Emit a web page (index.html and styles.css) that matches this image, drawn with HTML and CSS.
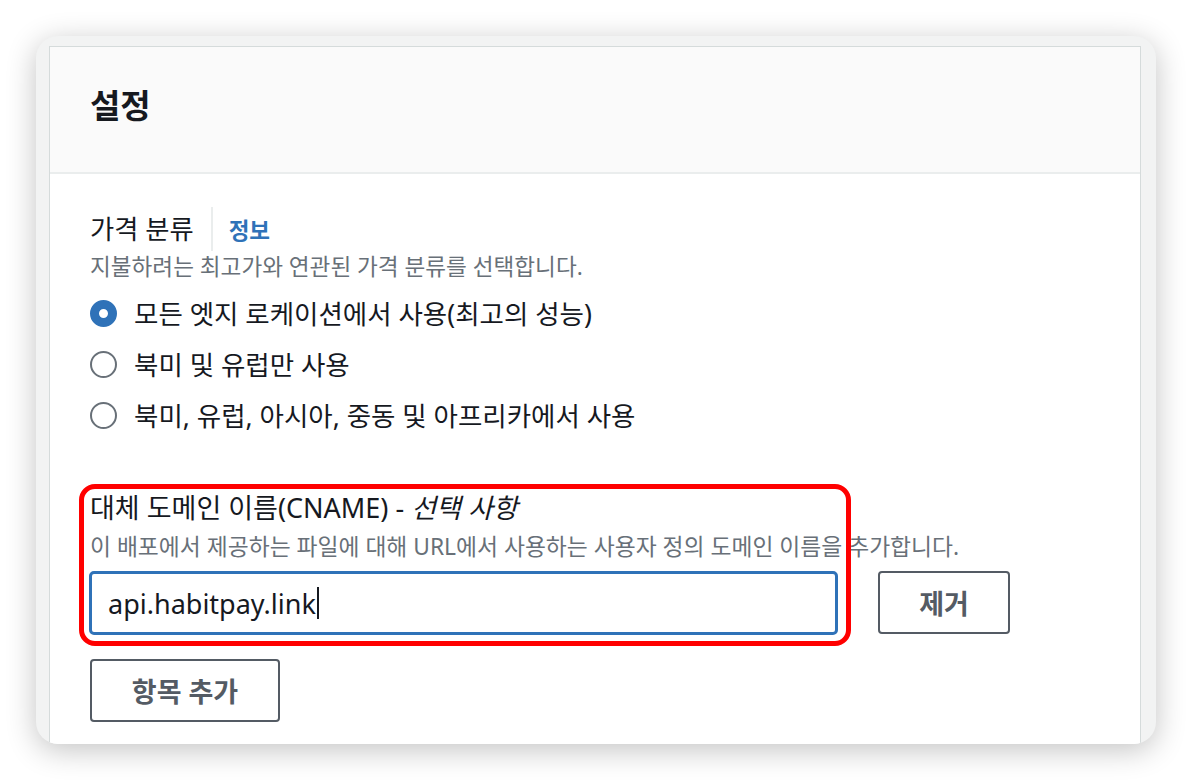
FILE: index.html
```html
<!DOCTYPE html>
<html lang="ko">
<head>
<meta charset="utf-8">
<title>설정</title>
<link rel="stylesheet" href="styles.css">
</head>
<body>
<div class="stage">
  <div class="frame">
    <section class="panel">
      <header class="panel-head">
        <h2 class="title">설정</h2>
      </header>
      <div class="panel-body">
        <div class="field">
          <div class="label-row">
            <span class="label">가격 분류</span>
            <span class="sep"></span>
            <a class="info">정보</a>
          </div>
          <div class="desc">지불하려는 최고가와 연관된 가격 분류를 선택합니다.</div>
          <div class="radios">
            <div class="radio-row"><span class="radio checked"></span><span class="radio-text">모든 엣지 로케이션에서 사용(최고의 성능)</span></div>
            <div class="radio-row"><span class="radio"></span><span class="radio-text">북미 및 유럽만 사용</span></div>
            <div class="radio-row"><span class="radio"></span><span class="radio-text">북미, 유럽, 아시아, 중동 및 아프리카에서 사용</span></div>
          </div>
        </div>
        <div class="field cname">
          <div class="cname-label">대체 도메인 이름(CNAME) - <i>선택 사항</i></div>
          <div class="desc cname-desc">이 배포에서 제공하는 파일에 대해 URL에서 사용하는 사용자 정의 도메인 이름을 추가합니다.</div>
          <div class="input-row">
            <div class="input"><span class="value">api.habitpay.link</span><span class="caret"></span></div>
            <button class="btn remove">제거</button>
          </div>
          <div class="highlight"></div>
        </div>
        <button class="btn add">항목 추가</button>
      </div>
    </section>
  </div>
</div>
</body>
</html>
```
FILE: styles.css
```css
html, body {
  margin: 0;
  padding: 0;
  background: #ffffff;
}
body {
  font-family: "Noto Sans", "Noto Sans CJK KR", sans-serif;
  color: #16191f;
}
.stage {
  padding: 36px;
}
.frame {
  box-sizing: border-box;
  width: 1120px;
  height: 708px;
  border-radius: 22px;
  overflow: hidden;
  background: #f2f3f3;
  box-shadow: 0 6px 30px rgba(0, 0, 0, 0.24);
  padding: 10px 15px 0 13px;
}
.panel {
  background: #ffffff;
  border: 1px solid #d5dbdb;
  height: 800px;
}
.panel-head {
  background: #fafafa;
  border-bottom: 2px solid #eaeded;
  padding: 38px 40px 45px;
}
.title {
  margin: 0;
  font-size: 33px;
  line-height: 42px;
  font-weight: 700;
  color: #16191f;
}
.panel-body {
  padding: 33px 40px 0;
}
.label-row {
  display: flex;
  align-items: center;
  height: 44px;
}
.label {
  font-size: 26.3px;
  line-height: 34px;
}
.sep {
  width: 2px;
  height: 44px;
  background: #eaeded;
  margin: 0 16px 0 17px;
}
.info {
  font-size: 22.5px;
  font-weight: 700;
  color: #2f72b8;
}
.desc {
  font-size: 22.6px;
  line-height: 30px;
  color: #687078;
  margin-top: 1px;
}
.radios {
  margin-top: 6px;
}
.radio-row {
  display: flex;
  align-items: center;
  height: 51px;
}
.radio {
  box-sizing: border-box;
  width: 27px;
  height: 27px;
  border-radius: 50%;
  border: 2px solid #687078;
  background: #ffffff;
  margin-right: 17px;
}
.radio.checked {
  border: 9px solid #2f72b8;
}
.radio-text {
  font-size: 26.5px;
  line-height: 34px;
}
.cname {
  position: relative;
  margin-top: 50px;
}
.cname-label {
  font-size: 27px;
  line-height: 34px;
}
.cname-label i {
  font-style: italic;
}
.cname-desc {
  margin-top: 7px;
  font-size: 22.8px;
}
.input-row {
  display: flex;
  align-items: flex-start;
  margin-top: 9px;
}
.input {
  box-sizing: border-box;
  width: 749px;
  height: 64px;
  border: 3px solid #2f72b8;
  border-radius: 5px;
  padding-left: 16px;
  display: flex;
  align-items: center;
  font-size: 27px;
  color: #16191f;
  margin-left: -1px;
}
.caret {
  display: inline-block;
  width: 2px;
  height: 32px;
  background: #16191f;
  margin-left: 1px;
}
.btn {
  box-sizing: border-box;
  height: 63px;
  background: #ffffff;
  border: 2px solid #545b64;
  border-radius: 4px;
  font-family: "Noto Sans", "Noto Sans CJK KR", sans-serif;
  font-size: 27px;
  font-weight: 700;
  color: #545b64;
  padding: 0;
}
.remove {
  width: 132px;
  margin-left: 40px;
}
.add {
  display: block;
  width: 190px;
  margin-top: 24px;
}
.highlight {
  position: absolute;
  left: -11px;
  top: -7px;
  width: 772px;
  height: 162px;
  box-sizing: border-box;
  border: 5px solid #ff0000;
  border-radius: 16px;
  pointer-events: none;
}
```
